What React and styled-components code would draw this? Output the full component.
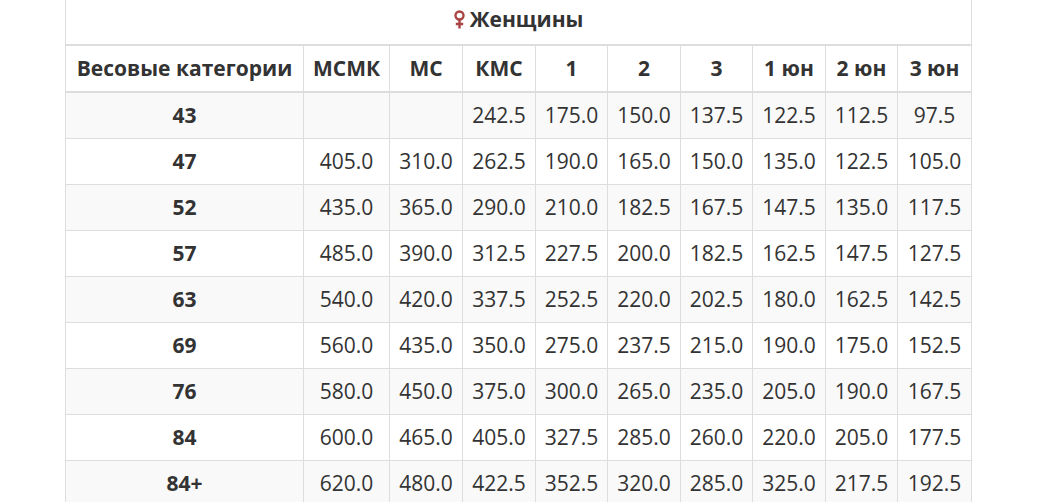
import React from "react";
import styled, { createGlobalStyle } from "styled-components";

const Global = createGlobalStyle`
  html, body { margin: 0; padding: 0; background: #fff; }
  body { font-family: "Open Sans", "Noto Sans", sans-serif; color: #333; }
`;

const Page = styled.div`
  padding-left: 65px;
  margin-top: -4px;
`;

const Table = styled.table`
  border-collapse: collapse;
  table-layout: fixed;
  width: 906px;
  font-size: 21px;
  line-height: 29px;
  border: 1px solid #ddd;
`;

const TitleCell = styled.th`
  padding: 8px;
  text-align: center;
  font-weight: 700;
  border-bottom: 2px solid #ddd;
`;

const Title = styled.span`
  display: inline-flex;
  align-items: center;
  gap: 5px;
`;

const HeadCell = styled.th`
  padding: 8px;
  text-align: center;
  font-weight: 700;
  border: 1px solid #ddd;
  border-bottom: 2px solid #ddd;
  white-space: nowrap;
`;

const Row = styled.tr`
  background: ${(p) => (p.$odd ? "#f9f9f9" : "#fff")};
`;

const Cell = styled.td`
  padding: 8px;
  text-align: center;
  border: 1px solid #ddd;
  font-weight: ${(p) => (p.$bold ? 700 : 400)};
  white-space: nowrap;
`;

const Venus = () => (
  <svg width="11" height="19" viewBox="0 0 11 19" aria-hidden="true">
    <circle cx="5.5" cy="5.5" r="4" fill="none" stroke="#a94442" strokeWidth="2.4" />
    <path d="M5.5 9.5 V18.5 M1.8 14 H9.2" stroke="#a94442" strokeWidth="2.4" fill="none" />
  </svg>
);

const widths = [238, 86, 73, 73, 72, 73, 72, 73, 72, 74];
const headers = ["Весовые категории", "МСМК", "МС", "КМС", "1", "2", "3", "1 юн", "2 юн", "3 юн"];
const rows = [
  ["43", "", "", "242.5", "175.0", "150.0", "137.5", "122.5", "112.5", "97.5"],
  ["47", "405.0", "310.0", "262.5", "190.0", "165.0", "150.0", "135.0", "122.5", "105.0"],
  ["52", "435.0", "365.0", "290.0", "210.0", "182.5", "167.5", "147.5", "135.0", "117.5"],
  ["57", "485.0", "390.0", "312.5", "227.5", "200.0", "182.5", "162.5", "147.5", "127.5"],
  ["63", "540.0", "420.0", "337.5", "252.5", "220.0", "202.5", "180.0", "162.5", "142.5"],
  ["69", "560.0", "435.0", "350.0", "275.0", "237.5", "215.0", "190.0", "175.0", "152.5"],
  ["76", "580.0", "450.0", "375.0", "300.0", "265.0", "235.0", "205.0", "190.0", "167.5"],
  ["84", "600.0", "465.0", "405.0", "327.5", "285.0", "260.0", "220.0", "205.0", "177.5"],
  ["84+", "620.0", "480.0", "422.5", "352.5", "320.0", "285.0", "325.0", "217.5", "192.5"],
];

export default function App() {
  return (
    <>
      <Global />
      <Page>
        <Table>
          <colgroup>
            {widths.map((w, i) => (
              <col key={i} style={{ width: w }} />
            ))}
          </colgroup>
          <thead>
            <tr>
              <TitleCell colSpan={10}>
                <Title>
                  <Venus />
                  Женщины
                </Title>
              </TitleCell>
            </tr>
            <tr>
              {headers.map((h) => (
                <HeadCell key={h}>{h}</HeadCell>
              ))}
            </tr>
          </thead>
          <tbody>
            {rows.map((r, i) => (
              <Row key={r[0]} $odd={i % 2 === 0}>
                {r.map((c, j) => (
                  <Cell key={j} $bold={j === 0}>
                    {c}
                  </Cell>
                ))}
              </Row>
            ))}
          </tbody>
        </Table>
      </Page>
    </>
  );
}
